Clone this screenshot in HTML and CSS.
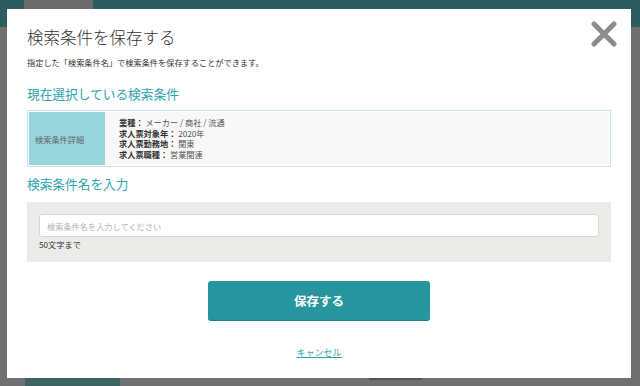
FILE: index.html
```html
<!DOCTYPE html>
<html lang="ja">
<head>
    <meta charset="UTF-8">
    <meta name="viewport" content="width=device-width, initial-scale=1.0">
    <title>検索条件を保存する</title>
    <link rel="stylesheet" href="styles.css">
</head>
<body>
    <div class="page">
        <div class="header">
            <div class="header-tab"></div>
        </div>
        <div class="main"></div>
        <div class="footer">
            <div class="footer-tab"></div>
            <div class="footer-bar"></div>
        </div>
    </div>

    <div class="modal">
        <a class="close" href="#" aria-label="閉じる">
            <svg width="26" height="26" viewBox="0 0 26 26">
                <path d="M3 3 L23 23 M23 3 L3 23" stroke="#8c8c8c" stroke-width="5" stroke-linecap="round" fill="none"/>
            </svg>
        </a>

        <h1 class="modal-title">検索条件を保存する</h1>
        <p class="modal-desc">指定した「検索条件名」で検索条件を保存することができます。</p>

        <h2 class="section-title">現在選択している検索条件</h2>
        <div class="condition">
            <div class="condition-label">検索条件詳細</div>
            <div class="condition-body">
                <div><b>業種：</b> メーカー / 商社 / 流通</div>
                <div><b>求人票対象年：</b> 2020年</div>
                <div><b>求人票勤務地：</b> 関東</div>
                <div><b>求人票職種：</b> 営業関連</div>
            </div>
        </div>

        <h2 class="section-title second">検索条件名を入力</h2>
        <div class="name-box">
            <input class="name-input" type="text" placeholder="検索条件名を入力してください">
            <div class="name-note">50文字まで</div>
        </div>

        <div class="actions">
            <button class="save-btn">保存する</button>
            <a class="cancel" href="#">キャンセル</a>
        </div>
    </div>
</body>
</html>
```

FILE: styles.css
```css
body {
    margin: 0;
    background-color: #707070;
    font-family: "Noto Sans CJK JP", "Noto Sans", sans-serif;
    color: #333;
}

.page {
    height: 386px;
    display: flex;
    flex-direction: column;
}

.header {
    height: 27px;
    background-color: #2e5b5d;
    display: flex;
}

.header-tab {
    margin-left: 24px;
    width: 69px;
    height: 10px;
    background-color: #6b6b6b;
}

.main {
    flex: 1;
}

.footer {
    height: 8px;
    display: flex;
}

.footer-tab {
    margin-left: 25px;
    width: 95px;
    background-color: #3e6261;
}

.footer-bar {
    margin-left: 249px;
    width: 53px;
    height: 2px;
    background-color: #555;
}

.modal {
    position: fixed;
    left: 7px;
    top: 9px;
    width: 624px;
    height: 369px;
    box-sizing: border-box;
    padding: 16px 20px;
    background-color: #fff;
}

.close {
    position: absolute;
    top: 12px;
    right: 14px;
    width: 26px;
    height: 26px;
}

.close svg {
    display: block;
}

.modal-title {
    margin: 0;
    font-size: 16.5px;
    line-height: 24px;
    font-weight: 300;
    color: #333;
}

.modal-desc {
    margin: 7px 0 0;
    font-size: 8.2px;
    line-height: 12px;
    color: #333;
}

.section-title {
    margin: 17px 0 0;
    font-size: 12.7px;
    line-height: 18px;
    font-weight: 400;
    color: #2ca3ad;
}

.section-title.second {
    margin-top: 8px;
}

.condition {
    margin-top: 7px;
    display: flex;
    border: 1px solid #bfe7ed;
    padding: 1px;
    background-color: #fff;
}

.condition-label {
    width: 70px;
    padding-left: 6px;
    display: flex;
    align-items: center;
    background-color: #96d5dc;
    font-size: 8.2px;
    color: #666;
}

.condition-body {
    flex: 1;
    padding: 5px 14px 6px;
    background-color: #f8f8f8;
    font-size: 8.2px;
    line-height: 10.5px;
    color: #555;
}

.condition-body b {
    color: #333;
}

.name-box {
    margin-top: 9px;
    padding: 12px 12px;
    background-color: #ebecea;
}

.name-input {
    display: block;
    width: 100%;
    height: 23px;
    box-sizing: border-box;
    padding: 0 7px;
    border: 1px solid #d6d6d6;
    border-radius: 3px;
    background-color: #fff;
    font-family: inherit;
    font-size: 8.2px;
    color: #333;
}

.name-input::placeholder {
    color: #b3b3b3;
}

.name-note {
    margin-top: 1px;
    font-size: 8.2px;
    line-height: 12px;
    color: #333;
}

.actions {
    display: flex;
    flex-direction: column;
    align-items: center;
}

.save-btn {
    margin-top: 19px;
    width: 222px;
    height: 40px;
    border: none;
    border-bottom: 1px solid #1e7e86;
    border-radius: 3px;
    background-color: #26959e;
    color: #fff;
    font-family: inherit;
    font-size: 12.5px;
    font-weight: 700;
    cursor: pointer;
}

.cancel {
    margin-top: 26px;
    font-size: 9px;
    line-height: 12px;
    color: #2ca3ad;
}
```
